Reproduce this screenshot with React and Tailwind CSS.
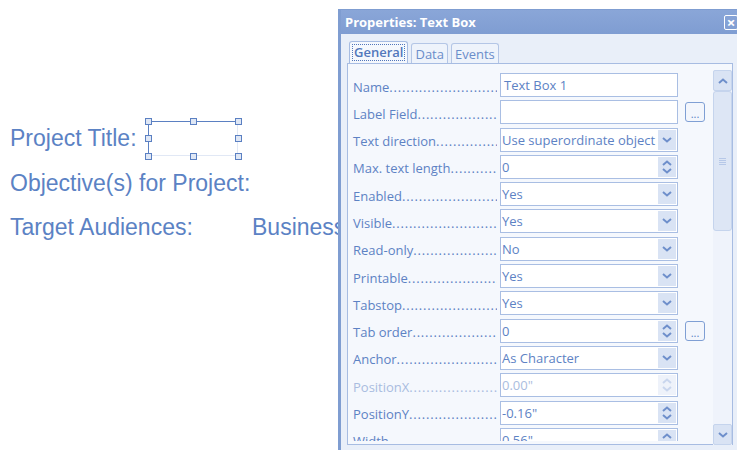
import React from "react";

const rows = [
  { label: "Name", value: "Text Box 1", kind: "text" },
  { label: "Label Field", value: "", kind: "text", more: true },
  { label: "Text direction", value: "Use superordinate object settings", kind: "select" },
  { label: "Max. text length", value: "0", kind: "spin" },
  { label: "Enabled", value: "Yes", kind: "select" },
  { label: "Visible", value: "Yes", kind: "select" },
  { label: "Read-only", value: "No", kind: "select" },
  { label: "Printable", value: "Yes", kind: "select" },
  { label: "Tabstop", value: "Yes", kind: "select" },
  { label: "Tab order", value: "0", kind: "spin", more: true },
  { label: "Anchor", value: "As Character", kind: "select" },
  { label: "PositionX", value: "0.00\"", kind: "spin", disabled: true },
  { label: "PositionY", value: "-0.16\"", kind: "spin" },
  { label: "Width", value: "0.56\"", kind: "spin" },
];

function Chevron({ up, className }) {
  return (
    <svg width="10" height="6" viewBox="0 0 10 6" className={className}>
      <path
        d={up ? "M1 5 L5 1.5 L9 5" : "M1 1 L5 4.5 L9 1"}
        fill="none"
        stroke="currentColor"
        strokeWidth="2"
      />
    </svg>
  );
}

function Handle() {
  return <div className="w-[7px] h-[7px] border border-[#5b80c2] bg-[#dfe7f5]" />;
}

function Row({ row }) {
  const labelColor = row.disabled ? "text-[#a9bce0]" : "text-[#5d82c4]";
  return (
    <div className="flex items-center h-[24px] shrink-0">
      <div className={`flex w-[152px] pl-[5px] pr-[3px] pt-[3px] overflow-hidden ${labelColor}`}>
        <span className="whitespace-nowrap shrink-0">{row.label}</span>
        <span className="flex-1 min-w-0 overflow-hidden whitespace-nowrap tracking-[0.8px]">
          ......................................................
        </span>
      </div>
      <div
        className={`flex items-center w-[178px] h-[24px] border border-[#a9bee3] bg-white ${
          row.disabled ? "text-[#aabde0]" : "text-[#5d82c4]"
        }`}
      >
        <span
          className={`flex-1 min-w-0 overflow-hidden whitespace-nowrap ${
            row.kind === "text" ? "pl-[3px]" : "pl-[1px]"
          }`}
        >
          {row.value}
        </span>
        {row.kind === "select" && (
          <div className="flex items-center justify-center w-[18px] h-[20px] mr-[1px] bg-[#d9e3f4] text-[#6e8fcb]">
            <Chevron />
          </div>
        )}
        {row.kind === "spin" && (
          <div
            className={`flex flex-col items-center justify-center gap-[2px] w-[18px] h-[20px] mr-[1px] ${
              row.disabled ? "bg-[#eef2fa] text-[#c9d6ee]" : "bg-[#d9e3f4] text-[#6e8fcb]"
            }`}
          >
            <Chevron up />
            <Chevron />
          </div>
        )}
      </div>
      {row.more && (
        <div className="ml-[7px] flex items-end justify-center w-[20px] h-[20px] rounded-[3px] border border-[#7f9fd4] bg-[#f3f6fc] text-[#5d82c4] text-[11px] leading-[14px]">
          ...
        </div>
      )}
    </div>
  );
}

export default function App() {
  return (
    <div className="relative w-[737px] h-[450px] overflow-hidden bg-white">
      <div
        className="pl-[10px] pt-[123px] text-[23px] leading-[26px] text-[#5b82c4]"
        style={{ fontFamily: "'Liberation Sans', Arial, sans-serif" }}
      >
        <div className="flex items-center h-[30px]">
          <span>Project Title:</span>
          <div className="relative ml-[8px] w-[97px] h-[42px] mt-[1px]">
            <div className="absolute left-[3px] top-[3px] w-[90px] h-[35px] border border-[#e1e8f5] border-t-[#5b80c2] border-l-[#5b80c2]" />
            <div className="absolute inset-0 flex flex-col justify-between">
              <div className="flex justify-between"><Handle /><Handle /><Handle /></div>
              <div className="flex justify-between"><Handle /><Handle /></div>
              <div className="flex justify-between"><Handle /><Handle /><Handle /></div>
            </div>
          </div>
        </div>
        <div className="mt-[17px]">Objective(s) for Project:</div>
        <div className="mt-[18px] flex">
          <span className="w-[242px]">Target Audiences:</span>
          <span>Business</span>
        </div>
      </div>

      <div
        className="absolute left-[338px] top-[9px] w-[420px] h-[460px] flex flex-col border-l-[3px] border-t border-[#7f9dd1] bg-[#e9eff9] text-[13px] leading-[16px]"
        style={{ fontFamily: "'Open Sans', 'DejaVu Sans', sans-serif" }}
      >
        <div className="flex items-center justify-between h-[24px] pl-[4px] bg-gradient-to-b from-[#8aa6d8] to-[#7f9dd2]">
          <span className="font-bold text-white text-[13px]">Properties: Text Box</span>
          <div className="mr-[20px] flex items-center justify-center w-[14px] h-[15px] border border-white rounded-[2px] text-white font-bold text-[15px] leading-none">
            ×
          </div>
        </div>
        <div className="flex items-end pl-[8px] pt-[7px] h-[29px] gap-[3px]">
          <div className="flex items-center h-[22px] px-[2px] border border-b-0 border-[#a7bce2] rounded-t-[3px] bg-[#f5f8fd] text-[#5277bb]">
            <span className="px-[1px] border border-dotted border-[#5277bb] leading-[15px] font-semibold">General</span>
          </div>
          <div className="flex items-center h-[20px] px-[3px] border border-b-0 border-[#b4c6e6] rounded-t-[3px] bg-[#eef3fb] text-[#6a8dca]">Data</div>
          <div className="flex items-center h-[20px] px-[3px] border border-b-0 border-[#b4c6e6] rounded-t-[3px] bg-[#eef3fb] text-[#6a8dca]">Events</div>
        </div>
        <div className="flex w-[386px] h-[382px] ml-[6px] border border-[#a7bce2] bg-[#f5f8fd]">
          <div className="w-[365px] h-[377px] overflow-hidden pt-[9px] flex flex-col gap-[3.3px]">
            {rows.map((r) => (
              <Row key={r.label} row={r} />
            ))}
          </div>
          <div className="flex flex-col w-[19px] mt-[6px] h-[375px] bg-[#eff3fb]">
            <div className="flex items-center justify-center h-[21px] rounded-[2px] border border-[#c5d4ed] bg-[#d9e3f4] text-[#6e8fcb]">
              <Chevron up />
            </div>
            <div className="flex items-center justify-center h-[140px] rounded-[3px] border border-[#c5d4ed] bg-[#dde6f5]">
              <div className="flex flex-col gap-[1px]">
                <div className="w-[7px] h-px bg-[#b6c8e8]" />
                <div className="w-[7px] h-px bg-[#b6c8e8]" />
                <div className="w-[7px] h-px bg-[#b6c8e8]" />
                <div className="w-[7px] h-px bg-[#b6c8e8]" />
              </div>
            </div>
            <div className="flex-1" />
            <div className="flex items-center justify-center h-[21px] rounded-[2px] border border-[#c5d4ed] bg-[#d9e3f4] text-[#6e8fcb]">
              <Chevron />
            </div>
          </div>
        </div>
      </div>
    </div>
  );
}
